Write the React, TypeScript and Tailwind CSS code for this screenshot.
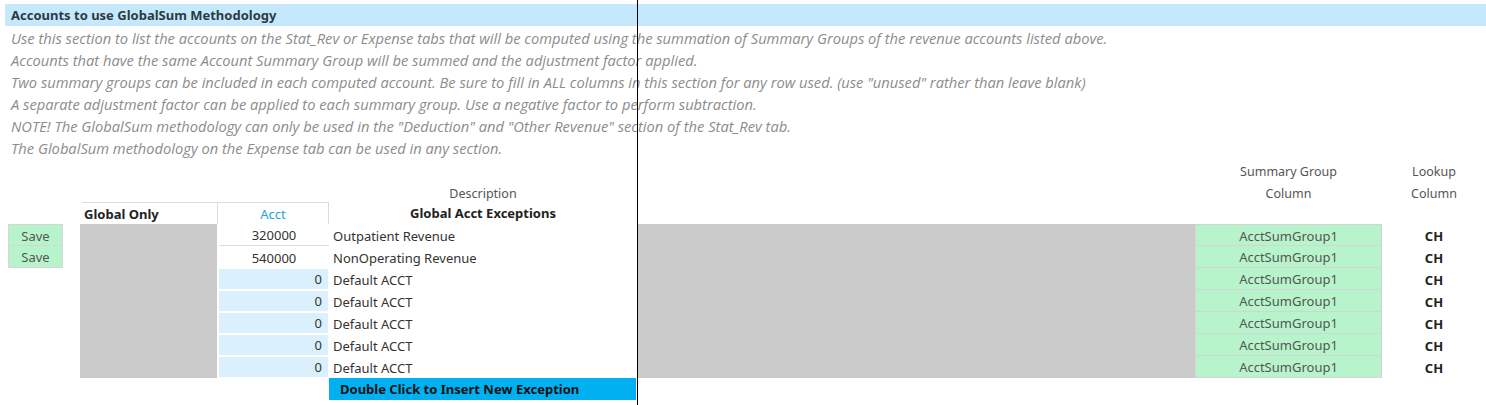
import React from "react";

const notes = [
  "Use this section to list the accounts on the Stat_Rev or Expense tabs that will be computed using the summation of Summary Groups of the revenue accounts listed above.",
  "Accounts that have the same Account Summary Group will be summed and the adjustment factor applied.",
  'Two summary groups can be included in each computed account. Be sure to fill in ALL columns in this section for any row used. (use "unused" rather than leave blank)',
  "A separate adjustment factor can be applied to each summary group. Use a negative factor to perform subtraction.",
  'NOTE! The GlobalSum methodology can only be used in the "Deduction" and "Other Revenue" section of the Stat_Rev tab.',
  "The GlobalSum methodology on the Expense tab can be used in any section.",
];

const rows = [
  { acct: "320000", desc: "Outpatient Revenue", real: true },
  { acct: "540000", desc: "NonOperating Revenue", real: true },
  { acct: "0", desc: "Default ACCT", real: false },
  { acct: "0", desc: "Default ACCT", real: false },
  { acct: "0", desc: "Default ACCT", real: false },
  { acct: "0", desc: "Default ACCT", real: false },
  { acct: "0", desc: "Default ACCT", real: false },
];

export default function App() {
  return (
    <div
      className="relative h-[405px] w-[1486px] overflow-hidden bg-white text-[13px] text-[#444]"
      style={{ fontFamily: '"Noto Sans", "Open Sans", sans-serif' }}
    >
      {/* Title bar */}
      <div className="ml-[5px] mt-[4px] flex h-[22px] items-center bg-[#c6e8fd] pl-[6px] pt-[1px] text-[13px] font-bold text-[#2d3a44]">
        Accounts to use GlobalSum Methodology
      </div>

      {/* Notes */}
      <div
        className="pl-[11px] text-[14.7px] italic text-[#8c8c8c]"
        style={{ fontFamily: '"Open Sans", Lato, sans-serif' }}
      >
        {notes.map((n, i) => (
          <div key={i} className="flex h-[22px] items-center whitespace-nowrap pt-[2px]">
            {n}
          </div>
        ))}
      </div>

      {/* Column labels line 1 */}
      <div className="mt-[2px] flex h-[22px] items-center pt-[2px] text-[12.5px] text-[#555]">
        <div className="w-[1195px]" />
        <div className="w-[187px] text-center">Summary Group</div>
        <div className="w-[104px] text-center">Lookup</div>
      </div>
      {/* Column labels line 2 */}
      <div className="flex h-[20px] items-center pt-[4px] text-[12.5px] text-[#555]">
        <div className="w-[329px]" />
        <div className="w-[308px] text-center">Description</div>
        <div className="w-[558px]" />
        <div className="w-[187px] text-center">Column</div>
        <div className="w-[104px] text-center">Column</div>
      </div>

      {/* Header row */}
      <div className="flex h-[22px]">
        <div className="w-[82px]" />
        <div className="flex w-[135px] items-center border-t border-[#dcdcdc] pl-[2px] pt-[2px] font-bold text-[#222]">
          Global Only
        </div>
        <div className="flex w-[112px] items-center justify-center border border-b-0 border-[#dcdcdc] pt-[2px] text-[#1ea5dc]">
          Acct
        </div>
        <div className="flex w-[308px] items-center justify-center pt-[2px] font-bold text-[#222]">
          Global Acct Exceptions
        </div>
      </div>

      {/* Data block */}
      <div className="flex">
        {/* Save column */}
        <div className="ml-[8px] flex w-[55px] flex-col self-start border border-[#d6d6d6] bg-[#b8f4cb]">
          <div className="flex h-[21px] items-center justify-center border-b border-[#d6d6d6] pt-[3px] text-[#555]">Save</div>
          <div className="flex h-[21px] items-center justify-center pt-[3px] text-[#555]">Save</div>
        </div>
        <div className="w-[17px]" />
        {/* Global only gray */}
        <div className="h-[154px] w-[137px] bg-[#cbcbcb]" />
        {/* Acct + Desc */}
        <div className="flex w-[420px] flex-col">
          {rows.map((r, i) => (
            <div key={i} className="flex h-[22px]">
              {r.real ? (
                <div
                  className={`ml-[2px] flex w-[110px] items-center justify-center pt-[3px] ${
                    i === 0 ? "border-b border-[#dcdcdc]" : ""
                  } text-[#333]`}
                >
                  {r.acct}
                </div>
              ) : (
                <div className="ml-[2px] mt-[1px] flex h-[20px] w-[109px] items-center justify-end bg-[#dbf0fd] pr-[6px] pt-[2px] text-[#333]">
                  {r.acct}
                </div>
              )}
              <div className={`flex items-center pl-[4px] pt-[3px] text-[#333] ${r.real ? "" : "ml-[1px]"}`}>{r.desc}</div>
            </div>
          ))}
          <div className="ml-[112px] flex h-[22px] w-[307px] items-center bg-[#00b0f0] pl-[11px] pt-[2px] text-[13px] font-bold text-[#111]">
            Double Click to Insert New Exception
          </div>
        </div>
        {/* Middle gray */}
        <div className="ml-[1px] h-[154px] w-[557px] bg-[#cbcbcb]" />
        {/* Summary group */}
        <div className="flex w-[187px] flex-col self-start">
          {rows.map((_, i) => (
            <div
              key={i}
              className={`flex h-[22px] items-center justify-center border-x border-b border-[#d4d4d4] bg-[#b8f4cb] pt-[3px] text-[#555] ${
                i === 0 ? "border-t" : ""
              }`}
            >
              AcctSumGroup1
            </div>
          ))}
        </div>
        {/* Lookup */}
        <div className="flex w-[104px] flex-col self-start">
          {rows.map((_, i) => (
            <div key={i} className="flex h-[22px] items-center justify-center pt-[3px] font-bold text-[#222]">
              CH
            </div>
          ))}
        </div>
      </div>

      {/* Freeze-pane line */}
      <div className="absolute bottom-0 left-[637px] top-0 w-px bg-black" />
    </div>
  );
}
